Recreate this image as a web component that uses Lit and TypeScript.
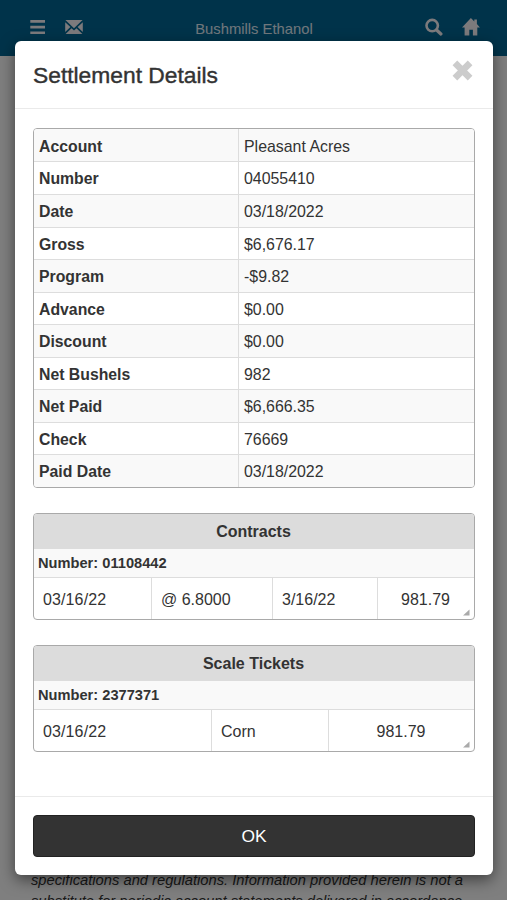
import { LitElement, html, css } from "lit";
import { customElement, property } from "lit/decorators.js";

const DETAILS: [string, string][] = [
  ["Account", "Pleasant Acres"],
  ["Number", "04055410"],
  ["Date", "03/18/2022"],
  ["Gross", "$6,676.17"],
  ["Program", "-$9.82"],
  ["Advance", "$0.00"],
  ["Discount", "$0.00"],
  ["Net Bushels", "982"],
  ["Net Paid", "$6,666.35"],
  ["Check", "76669"],
  ["Paid Date", "03/18/2022"],
];

@customElement("record-card")
export class RecordCard extends LitElement {
  @property() heading = "";
  @property() number = "";
  @property({ attribute: false }) cells: string[] = [];

  static styles = css`
    :host {
      display: block;
      box-sizing: border-box;
      height: 107px;
      border: 1px solid #a9a9a9;
      border-radius: 4px;
      overflow: hidden;
      position: relative;
      background: #fff;
      color: #333;
    }
    .heading {
      height: 35px;
      line-height: 36px;
      background: #dcdcdc;
      text-align: center;
      font-weight: 700;
      font-size: 16px;
      text-indent: -1px;
    }
    .number {
      height: 28px;
      line-height: 29px;
      padding-left: 4px;
      background: #f9f9f9;
      border-bottom: 1px solid #ddd;
      font-weight: 700;
      font-size: 14.65px;
    }
    .row {
      display: grid;
      height: 41px;
      line-height: 43px;
      font-size: 16px;
    }
    .four {
      grid-template-columns: 117px 121px 105px 1fr;
    }
    .three {
      grid-template-columns: 177px 117px 1fr;
    }
    .cell {
      padding-left: 9px;
      border-left: 1px solid #ddd;
      white-space: nowrap;
    }
    .cell:first-child {
      border-left: 0;
      letter-spacing: 0.12px;
    }
    .cell:last-child {
      padding: 0 1px 0 0;
      text-align: center;
    }
    .grip {
      position: absolute;
      right: 4px;
      bottom: 3px;
      width: 7px;
      height: 7px;
      display: block;
    }
  `;

  render() {
    return html`
      <div class="heading">${this.heading}</div>
      <div class="number">Number: ${this.number}</div>
      <div class="row ${this.cells.length === 4 ? "four" : "three"}">
        ${this.cells.map((c) => html`<div class="cell">${c}</div>`)}
      </div>
      <svg class="grip" viewBox="0 0 7 7"><path d="M6.5 0.5V6.5H0Z" fill="#aaa" /></svg>
    `;
  }
}

@customElement("app-root")
export class AppRoot extends LitElement {
  static styles = css`
    :host {
      display: block;
      position: relative;
      height: 900px;
      overflow: hidden;
      background: #fff;
      font-family: "Liberation Sans", Arial, sans-serif;
      color: #333;
    }
    .page {
      display: flex;
      flex-direction: column;
      height: 900px;
    }
    .bar {
      flex: none;
      display: grid;
      grid-template-columns: 1fr auto 1fr;
      height: 56px;
      background: #006795;
      box-sizing: border-box;
      padding: 0 27px 0 30px;
    }
    .icons {
      display: flex;
      padding-top: 18px;
      gap: 19px;
    }
    .icons svg {
      display: block;
      fill: #f8f4f8;
    }
    .icons.end {
      justify-content: flex-end;
    }
    .brand {
      padding-top: 19px;
      line-height: 20px;
      font-size: 14.8px;
      color: #e0eef8;
      transform: translateX(-1px);
    }
    .notice {
      margin: auto 0 0 31px;
      height: 30px;
      font-style: italic;
      font-size: 14.73px;
      line-height: 20.5px;
      white-space: nowrap;
    }
    .overlay {
      position: absolute;
      inset: 0;
      box-sizing: border-box;
      padding: 41px 14px 25px 15px;
      background: rgba(0, 0, 0, 0.5);
    }
    .modal {
      display: flex;
      flex-direction: column;
      height: 834px;
      box-sizing: border-box;
      background: #fff;
      border-radius: 6px;
      box-shadow: 0 5px 15px rgba(0, 0, 0, 0.5);
    }
    .head {
      display: flex;
      justify-content: space-between;
      height: 67px;
      border-bottom: 1px solid #eaeaea;
      padding: 0 20px 0 18px;
    }
    .title {
      margin: 0;
      font-weight: 400;
      font-size: 22.8px;
      line-height: 68px;
      -webkit-text-stroke: 0.4px #333;
    }
    .close {
      display: block;
      margin-top: 19px;
    }
    .body {
      flex: 1;
      display: flex;
      flex-direction: column;
      gap: 25px;
      padding: 19px 18px 0;
    }
    .details {
      flex: none;
      box-sizing: border-box;
      height: 360px;
      display: grid;
      grid-template-rows: 32.4px;
      grid-auto-rows: 1fr;
      border: 1px solid #a9a9a9;
      border-radius: 4px;
      overflow: hidden;
      font-size: 15.9px;
      line-height: 33px;
    }
    .pair {
      display: grid;
      grid-template-columns: 204px 1fr;
      min-height: 0;
      overflow: hidden;
      border-top: 1px solid #ddd;
    }
    .pair:first-child {
      border-top: 0;
      line-height: 35px;
    }
    .pair:nth-child(odd) {
      background: #f9f9f9;
    }
    .key {
      font-weight: 700;
      padding-left: 5px;
      font-size: 15.8px;
    }
    .value {
      padding-left: 5px;
      border-left: 1px solid #ddd;
    }
    .foot {
      box-sizing: border-box;
      border-top: 1px solid #eaeaea;
      height: 79px;
      padding: 18px 18px 0;
    }
    .ok {
      display: block;
      width: 100%;
      height: 42px;
      border: 1px solid #222;
      border-radius: 4px;
      background: #333;
      color: #fff;
      font: 17.4px "Liberation Sans", Arial, sans-serif;
      padding: 0;
    }
  `;

  render() {
    return html`
      <div class="page">
        <div class="bar">
          <div class="icons">
            <svg width="16" height="18" viewBox="0 0 16 18">
              <path d="M.3 2h14.7v2.7H.3zM.3 7.7h14.7v2.7H.3zM.3 13.4h14.7v2.7H.3z" />
            </svg>
            <svg width="18" height="18" viewBox="0 0 18 18">
              <path d="M.4 2h17.2L9 10.2zM.2 4.2l5.2 4.9L.2 13.9zM17.8 4.2v9.7l-5.2-4.8zM6.5 10.2L9 12.5l2.5-2.3 5.9 5.9H.6z" />
            </svg>
          </div>
          <div class="brand">Bushmills Ethanol</div>
          <div class="icons end">
            <svg width="18" height="18" viewBox="0 0 18 18">
              <circle cx="7.2" cy="7.6" r="5.7" fill="none" stroke="#f8f4f8" stroke-width="2.6" />
              <path d="M11.6 12l4.3 4" fill="none" stroke="#f8f4f8" stroke-width="3.2" stroke-linecap="round" />
            </svg>
            <svg width="18" height="18" viewBox="0 0 18 18">
              <path d="M8.9 0L12.3 3.4V1.4h2.6v4.6L17.9 9.6H15.3V17.6H10.9V11.7H7.3V17.6H2.6V9.6H0z" />
            </svg>
          </div>
        </div>
        <div class="notice">
          specifications and regulations. Information provided herein is not a<br />substitute
          for periodic account statements delivered in accordance
        </div>
      </div>
      <div class="overlay">
        <div class="modal">
          <div class="head">
            <h1 class="title">Settlement Details</h1>
            <svg class="close" width="21" height="21" viewBox="0 0 21 21">
              <path d="M2.9 2.9L18.1 18.1M18.1 2.9L2.9 18.1" stroke="#ccc" stroke-width="6.6" />
            </svg>
          </div>
          <div class="body">
            <div class="details">
              ${DETAILS.map(
                ([k, v]) => html`<div class="pair">
                  <div class="key">${k}</div>
                  <div class="value">${v}</div>
                </div>`
              )}
            </div>
            <record-card
              heading="Contracts"
              number="01108442"
              .cells=${["03/16/22", "@ 6.8000", "3/16/22", "981.79"]}
            ></record-card>
            <record-card
              heading="Scale Tickets"
              number="2377371"
              .cells=${["03/16/22", "Corn", "981.79"]}
            ></record-card>
          </div>
          <div class="foot"><button class="ok">OK</button></div>
        </div>
      </div>
    `;
  }
}
